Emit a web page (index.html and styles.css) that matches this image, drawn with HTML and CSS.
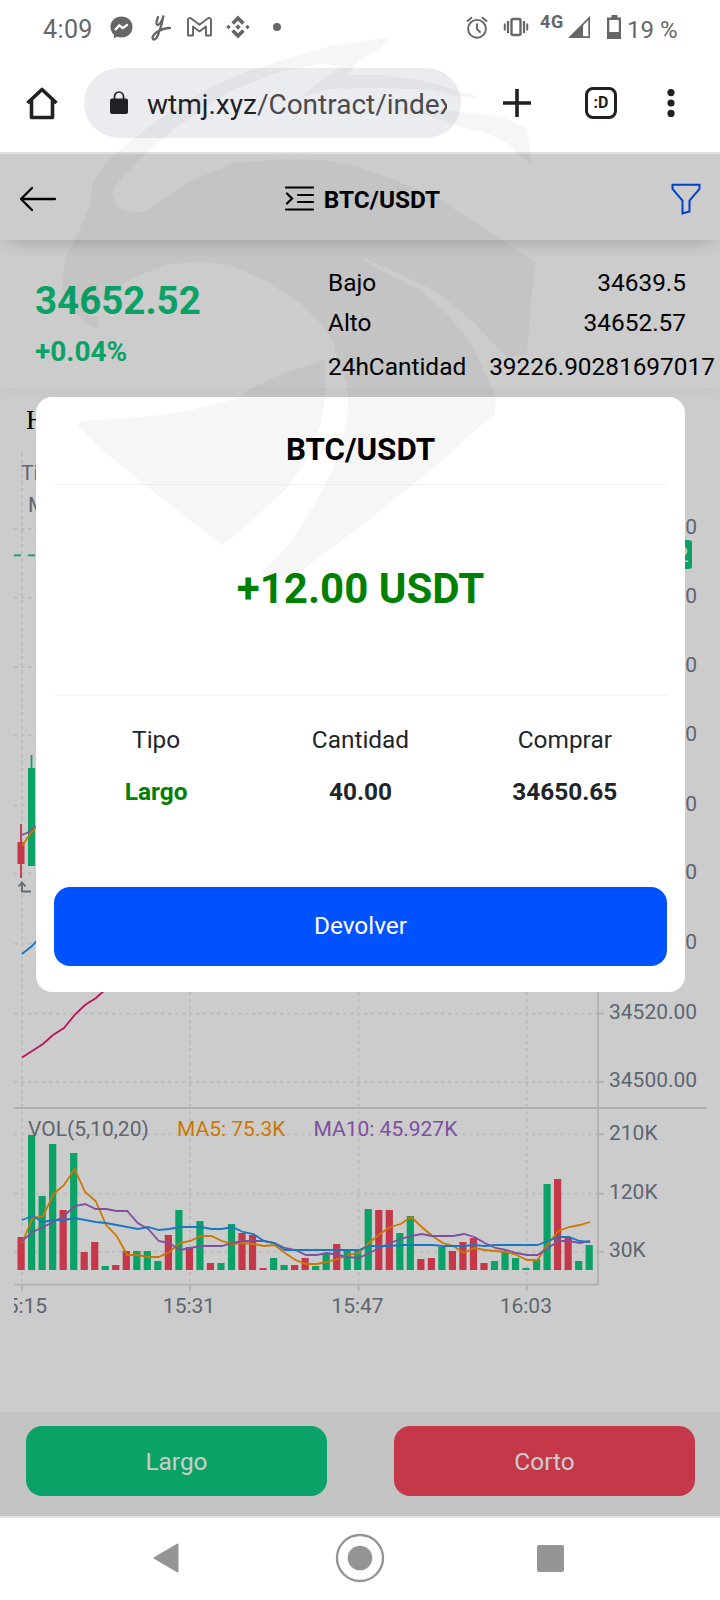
FILE: index.html
```html
<!DOCTYPE html>
<html lang="es">
<head>
  <meta charset="UTF-8">
  <meta name="viewport" content="width=device-width, initial-scale=1.0">
  <title>BTC/USDT</title>
  <link rel="stylesheet" href="styles.css">
</head>
<body>

<div class="phone">

  <div class="status-bar">
    <span class="clock">4:09</span>
    <svg class="ic-messenger" width="23" height="23" viewBox="0 0 23 23"><path d="M11.5 0.5C5.2 0.5 0.5 5 0.5 11c0 3.2 1.4 5.900 3.400 7.700V22.300l3.200-1.500c1.400.5 2.900.7 4.400.7 6.300 0 11-4.500 11-10.500S17.800.5 11.500.5z" fill="#666"/><path d="M5 14l4.300-4.600 3.400 2.700 5-3.600" fill="none" stroke="#fff" stroke-width="2.400"/></svg>
    <svg class="ic-y" width="20" height="27" viewBox="0 0 20 27"><path d="M7 3C5.500 7 4.800 10.500 6.500 11c2 .4 4.700-4 6-9.500C11.500 8 9 16 7 21c-1.300 3.500-3.500 5.500-5 4-1.200-1.500.2-4.500 4-7C10 15.500 14 14 19 14" fill="none" stroke="#666" stroke-width="2.300" stroke-linecap="round"/></svg>
    <svg class="ic-gmail" width="25" height="20" viewBox="0 0 25 20"><path d="M1 18.500V2.800C1 1 3 .6 4.300 1.600l8.200 6.200 8.200-6.200C22 .6 24 1 24 2.800v15.700h-5V9.500l-6.500 4.900L6 9.500v9z" fill="none" stroke="#666" stroke-width="1.900" stroke-linejoin="round"/></svg>
    <svg class="ic-binance" width="24" height="24" viewBox="0 0 24 24" fill="#666"><path d="M12 .5l6.700 6.700-2.600 2.600L12 5.700 7.900 9.800 5.300 7.200zM12 23.500l6.700-6.700-2.600-2.600-4.100 4.100-4.100-4.100-2.600 2.600zM12 9.300l2.700 2.700-2.700 2.700L9.300 12zM2.500 9.700L4.800 12l-2.300 2.300L.2 12zM21.500 9.700l2.300 2.300-2.300 2.300-2.300-2.300z"/></svg>
    <span class="more-dot"></span>
    <span class="spacer"></span>
    <svg class="ic-alarm" width="22" height="23" viewBox="0 0 22 23" fill="none" stroke="#666" stroke-width="1.900"><circle cx="11" cy="12.800" r="8.900"/><path d="M11 7.500v5.500l3.500 3.700M1 5.500L6 1.200M21 5.500L16 1.200"/></svg>
    <svg class="ic-vibrate" width="26" height="20" viewBox="0 0 26 20" fill="none" stroke="#666"><rect x="8.500" y="2" width="9" height="16" rx="1.500" stroke-width="2.400"/><path d="M5 4v12M21 4v12" stroke-width="2.200"/><path d="M1.800 6.500v7M24.200 6.500v7" stroke-width="2"/></svg>
    <span class="net">4G</span>
    <svg class="ic-signal" width="22" height="22" viewBox="0 0 22 22"><path d="M0 22L22 0v22z" fill="#666"/><path d="M15 9.500L20.300 4v16.300H15z" fill="#fff"/></svg>
    <svg class="ic-battery" width="15" height="24" viewBox="0 0 15 24"><path d="M4.500 0h6v2.500h3.500V24H0V2.500h4.500z" fill="#666"/><path d="M2.300 5h9.500v12H2.300z" fill="#fff"/></svg>
    <span class="percent">19 %</span>
  </div>

  <div class="browser-bar">
    <svg class="home" width="32" height="33" viewBox="0 0 32 33"><path d="M1.500 16L16 2.500 30.500 16M5.500 13v17.500h21V13" fill="none" stroke="#202124" stroke-width="3.600" stroke-linejoin="round"/></svg>
    <div class="url-pill">
      <svg width="18" height="24" viewBox="0 0 18 24"><rect x="0" y="7.500" width="18" height="15.500" rx="2" fill="#202124"/><path d="M4.500 8V5.500a4.500 4.500 0 0 1 9 0V8" fill="none" stroke="#202124" stroke-width="1.700"/></svg>
      <span class="url">wtmj.xyz<span>/Contract/index</span></span>
    </div>
    <svg class="plus" width="28" height="28" viewBox="0 0 28 28"><path d="M14 0v28M0 14h28" stroke="#202124" stroke-width="3.600"/></svg>
    <span class="tabs">:D</span>
    <svg class="dots" width="8" height="28" viewBox="0 0 8 28" fill="#202124"><circle cx="4" cy="3.600" r="3.600"/><circle cx="4" cy="14" r="3.600"/><circle cx="4" cy="24.400" r="3.600"/></svg>
  </div>

  <div class="page">
    <div class="app-header">
      <svg width="38" height="26" viewBox="0 0 38 26"><path d="M36 13H2M13 2L2 13l11 11" fill="none" stroke="#000" stroke-width="2.300" stroke-linecap="round" stroke-linejoin="round"/></svg>
      <div class="pair">
        <svg width="29" height="26" viewBox="0 0 29 26"><path d="M1 1.500h27M13 9h15M13 16h15M1 23.500h27M2 7.500l5 5-5 5" fill="none" stroke="#000" stroke-width="2.200" stroke-linecap="round"/></svg>
        <span>BTC/USDT</span>
      </div>
      <svg width="30" height="32" viewBox="0 0 30 32"><path d="M1.500 1.800h27V6L18.500 17.500v11l-7 2V17.500L1.500 6z" fill="none" stroke="#0052ff" stroke-width="2"/></svg>
    </div>

    <div class="quote">
      <div class="last">
        <div class="price">34652.52</div>
        <div class="change">+0.04%</div>
      </div>
      <div class="stats">
        <div class="stat"><span>Bajo</span><span>34639.5</span></div>
        <div class="stat"><span>Alto</span><span>34652.57</span></div>
        <div class="stat"><span>24hCantidad</span><span>39226.90281697017</span></div>
      </div>
    </div>

    <svg class="chart" id="chart" width="720" height="1024" viewBox="0 388 720 1024"></svg>

    <div class="trade-bar">
      <button class="long">Largo</button>
      <button class="short">Corto</button>
    </div>

    <!-- Order result -->
    <div class="mask">
      <div class="modal">
        <h2>BTC/USDT</h2>
        <div class="profit">+12.00 USDT</div>
        <div class="order">
          <div><p>Tipo</p><b class="up">Largo</b></div>
          <div><p>Cantidad</p><b>40.00</b></div>
          <div><p>Comprar</p><b>34650.65</b></div>
        </div>
        <button class="back">Devolver</button>
      </div>
    </div>
  </div>

  <div class="nav-bar">
    <svg width="26" height="30" viewBox="0 0 26 30"><path d="M24.500 1.500v27L1.500 15z" fill="#959595" stroke="#959595" stroke-width="2" stroke-linejoin="round"/></svg>
    <svg class="nav-home" width="50" height="50" viewBox="0 0 50 50"><circle cx="25" cy="25" r="23" fill="none" stroke="#959595" stroke-width="2.400"/><circle cx="25" cy="25" r="12.300" fill="#959595"/></svg>
    <svg width="27" height="27" viewBox="0 0 27 27"><rect width="27" height="27" rx="2" fill="#959595"/></svg>
  </div>

  <svg class="watermark" width="720" height="1600" viewBox="0 0 720 1600">
    <path d="M391 37L331 46 285 59 248 71 211 87 184 103 156 121 133 139 110 159 100 170 92 186 90 205 76 237 65 259 62 287 72 309 85 323 100 330 98 316 91 317 100 300 122 285 133 278 167 265 200 262 230 265 267 282 300 303 320 323 333 340 338 363 347 383 348 400 347 420 337 460 317 500 290 543 262 572 273 583 300 572 333 547 360 527 397 497 440 463 473 432 495 415 496 397 487 377 473 347 450 317 420 290 383 272 361 257 393 271 437 292 470 319 507 357 527 355 532 293 536 263 503 240 487 230 440 200 400 182 360 167 323 160 283 159 233 163 193 180 167 197 147 210 133 213 117 208 112 193 120 180 143 156 173 130 217 100 233 90 277 73 320 64 341 66 327 76 300 98 330 89 380 88 432 90 460 97 478 99 478 97 460 91 420 80 380 75 347 75 358 62 381 48z"/>
    <path d="M386 107L463 112 503 117 527 128 532 163 517 154 507 143 487 133 460 127 427 115z"/>
    <path d="M325 360L287 372 253 387 239 398 203 407 177 413 140 417 82 421 78 426 100 448 145 485 193 523 223 545 253 520 287 488 307 460 320 427 325 400z"/>
  </svg>

</div>

<script src="chart.js"></script>
</body>
</html>
```

FILE: styles.css
```css
* {
  box-sizing: border-box;
}

body {
  margin: 0;
  font-family: Roboto, "Liberation Sans", sans-serif;
  background-color: white;
}

svg {
  display: block;
  flex: none;
}

button {
  border: none;
  padding: 0;
  font-family: inherit;
  font-size: 24.400px;
  border-radius: 16px;
}

.phone {
  position: relative;
  width: 720px;
  height: 1600px;
  overflow: hidden;
  display: flex;
  flex-direction: column;
}

/* status bar */
.status-bar {
  height: 56px;
  padding: 0 42px 2px 43px;
  display: flex;
  align-items: center;
  color: #666;
}

.clock {
  width: 67px;
  font-size: 25px;
  letter-spacing: 0.4px;
  padding-top: 5px;
}

.ic-y {
  margin-left: 18px;
}

.ic-gmail {
  margin-left: 16px;
}

.ic-binance {
  margin-left: 14px;
}

.more-dot {
  width: 8px;
  height: 8px;
  margin-left: 23px;
  border-radius: 50%;
  background-color: #666;
}

.spacer {
  flex: 1;
}

.ic-vibrate {
  margin-left: 15px;
}

.net {
  width: 28px;
  margin-left: 11px;
  font-size: 18px;
  font-weight: bold;
  line-height: 20px;
  letter-spacing: 0.6px;
  padding-bottom: 10px;
}

.ic-battery {
  margin-left: 17px;
}

.percent {
  width: 51px;
  margin-left: 5px;
  padding-top: 5px;
  font-size: 24px;
  white-space: nowrap;
}

/* browser */
.browser-bar {
  height: 98px;
  padding: 12px 45px 14px 26px;
  display: flex;
  align-items: center;
  border-bottom: 2px solid #e0e0e0;
}

.url-pill {
  width: 377px;
  height: 70px;
  margin-left: 26px;
  padding: 0 14px 0 26px;
  display: flex;
  align-items: center;
  border-radius: 35px;
  background-color: #ebecf0;
}

.url {
  flex: 1;
  margin-left: 19px;
  overflow: hidden;
  white-space: nowrap;
  font-size: 28px;
  color: #202124;
  line-height: 40px;
  padding-top: 4px;
}

.url span {
  color: #4a4b4e;
}

.plus {
  margin-left: 42px;
}

.tabs {
  width: 32px;
  height: 32px;
  margin-left: 54px;
  border: 3.500px solid #202124;
  border-radius: 8px;
  font-size: 16px;
  font-weight: bold;
  line-height: 25px;
  text-align: center;
  color: #202124;
}

.dots {
  margin-left: 50px;
}

/* page */
.page {
  position: relative;
  height: 1362px;
}

.app-header {
  position: relative;
  height: 86px;
  padding: 3px 19px 0 19px;
  display: flex;
  align-items: center;
  justify-content: space-between;
  box-shadow: 0 10px 16px -8px rgba(0, 0, 0, 0.2);
}

.pair {
  display: flex;
  align-items: center;
  gap: 10px;
  margin-right: 3px;
  font-size: 24.400px;
  font-weight: bold;
}

.pair span {
  padding-top: 2px;
}

.quote {
  height: 148px;
  padding: 23px 34px 0 35px;
  display: flex;
  justify-content: space-between;
  box-shadow: 0 8px 16px -6px rgba(0, 0, 0, 0.06);
}

.last {
  font-weight: bold;
  color: #0ecb81;
}

.price {
  margin-top: 12px;
  font-size: 38.500px;
  line-height: 52px;
}

.change {
  margin-top: 10px;
  font-size: 28px;
  line-height: 30px;
}

.stats {
  width: 358px;
  font-size: 24.400px;
  line-height: 40px;
}

.stat {
  display: flex;
  justify-content: space-between;
  gap: 23px;
  white-space: nowrap;
}

.stat:last-child {
  margin-top: 4px;
}

.chart {
  font-size: 21px;
  fill: #76808f;
}

.trade-bar {
  height: 104px;
  padding: 14px 25px 20px 26px;
  display: flex;
  justify-content: space-between;
  background-color: #f5f5f5;
}

.trade-bar button {
  width: 301px;
  color: white;
}

.long {
  background-color: #0ecb81;
}

.short {
  background-color: #f6465d;
}

/* modal */
.mask {
  position: absolute;
  inset: 0;
  background-color: rgba(0, 0, 0, 0.2);
}

.modal {
  width: 649px;
  height: 595px;
  margin: 243px 0 0 36px;
  padding: 18px 18px 26px;
  display: flex;
  flex-direction: column;
  background-color: white;
  border-radius: 16px;
  text-align: center;
}

.modal h2 {
  height: 70px;
  margin: 0;
  border-bottom: 1px solid #f3f3f3;
  font-size: 31.300px;
  line-height: 69px;
  color: black;
}

.profit {
  height: 211px;
  border-bottom: 1px solid #f3f3f3;
  font-size: 42px;
  font-weight: bold;
  line-height: 207px;
  color: green;
}

.order {
  flex: 1;
  display: grid;
  grid-template-columns: 1fr 1fr 1fr;
  padding-top: 24px;
  font-size: 24.400px;
  line-height: 40px;
  color: #212529;
}

.order p {
  margin: 0 0 12px;
}

.up {
  color: green;
}

.back {
  height: 79px;
  padding-bottom: 2px;
  background-color: #0052ff;
  color: white;
}

/* android navigation */
.nav-bar {
  height: 84px;
  padding: 0 156px 2px 153px;
  display: flex;
  align-items: center;
  justify-content: space-between;
  border-top: 2px solid #e2e2e2;
}

.nav-home {
  margin-left: 4px;
}

.watermark {
  position: absolute;
  left: 0;
  top: 0;
  fill: rgba(0, 0, 0, 0.037);
  pointer-events: none;
}
```

FILE: chart.js
```js
const GREEN = '#0ecb81';
const RED = '#f6465d';
const STEP = 10.52;
const BASE = 1270;

// volume bars: direction + height
const volume = ['r33', 'g135', 'g74', 'g126', 'r60', 'g117', 'r18', 'r28', 'g4', 'r5', 'r19', 'g19', 'g19', 'g9',
  'r35', 'g60', 'r23', 'g49', 'r7', 'g7', 'g46', 'r37', 'r35', 'r2', 'g12', 'g5', 'r5', 'r12', 'g4', 'g16', 'r26',
  'g19', 'g19', 'g61', 'r60', 'r60', 'g37', 'g54', 'r11', 'r12', 'g23', 'r19', 'r28', 'r32', 'r7', 'g9', 'g18',
  'g12', 'g2', 'g11', 'g86', 'r91', 'r32', 'g9', 'g25'];

const ma5 = [27, 52, 54, 76, 85, 101, 78, 69, 45, 34, 15, 15, 13, 13, 18, 27, 29, 34, 34, 29, 26, 27, 26, 24, 25, 17,
  10, 6, 6, 8, 11, 15, 17, 27, 36, 43, 46, 53, 43, 34, 27, 24, 17, 22, 20, 19, 18, 15, 10, 10, 26, 39, 43, 45, 48];
const ma10 = [29, 38, 43, 48, 54, 64, 66, 61, 61, 59, 59, 47, 41, 29, 27, 20, 22, 24, 24, 24, 27, 29, 29, 29, 27, 22,
  20, 15, 15, 17, 15, 13, 12, 17, 22, 27, 31, 34, 36, 34, 34, 34, 36, 33, 27, 22, 20, 17, 15, 15, 22, 29, 29, 27, 29];
const ma20 = [50, 54, 48, 50, 50, 52, 50, 48, 47, 45, 43, 41, 43, 40, 41, 43, 43, 43, 41, 41, 43, 38, 36, 29, 27, 20,
  20, 20, 20, 20, 20, 20, 20, 24, 24, 24, 25, 25, 25, 25, 24, 24, 24, 25, 24, 25, 25, 25, 25, 25, 29, 33, 33, 29, 28];

const prices = [529, 597.5, 667, 735.5, 805.5, 873.5, 943.7, 1013.5, 1082];
const volumes = [['210K', 1134.3], ['120K', 1193.7], ['30K', 1251.7]];
const times = [['15:15', 22], ['15:31', 190], ['15:47', 358.5], ['16:03', 526.8]];

let out = '<clipPath id="plot"><rect x="14" y="388" width="693" height="1024"/></clipPath>';

function line(x1, y1, x2, y2, color, dash) {
  out += `<path d="M${x1} ${y1}L${x2} ${y2}" stroke="${color}" stroke-width="1.8"${dash ? ` stroke-dasharray="${dash}"` : ''}/>`;
}

function text(x, y, value, extra) {
  out += `<text x="${x}" y="${y}" ${extra || ''}>${value}</text>`;
}

function polyline(points, color) {
  out += `<polyline points="${points}" fill="none" stroke="${color}" stroke-width="1.8"/>`;
}

function average(data, color) {
  polyline(data.map((h, i) => `${22 + i * STEP},${BASE - h}`).join(' '), color);
}

// grid
prices.forEach(y => line(14, y, 597, y, '#ededed', '3.5 3.5'));
volumes.forEach(v => line(14, v[1], 597, v[1], '#ededed', '3.5 3.5'));
times.forEach(t => line(t[1], 453, t[1], 1284, '#ededed', '3.5 3.5'));

// axes
line(14, 1108, 707, 1108, '#ddd');
line(14, 1284.7, 598, 1284.7, '#ddd');
line(598, 453, 598, 1285, '#ddd');
prices.forEach((y, i) => {
  line(598, y, 604, y, '#ddd');
  text(609, y + 5, (34660 - i * 20) + '.00');
});
volumes.forEach(v => {
  line(598, v[1], 604, v[1], '#ddd');
  text(609, v[1] + 5.5, v[0]);
});
out += '<g clip-path="url(#plot)">';
times.forEach(t => {
  line(t[1], 1285, t[1], 1291, '#ddd');
  text(t[1] - 1, 1313, t[0], 'text-anchor="middle"');
});
out += '</g>';

// candles
line(21, 824, 21, 878, RED);
out += `<rect x="17.5" y="842" width="7" height="22" fill="${RED}"/>`;
line(31.5, 755, 31.5, 768, GREEN);
out += `<rect x="28" y="768" width="7" height="98" fill="${GREEN}"/>`;
polyline('22,835 30,831.5 40,823', '#9d65c9');
polyline('22,846 30,834 40,823', '#ff9600');
polyline('22,954 32,946 40,937', '#2196f3');
polyline('22,1057.500 43,1044 53,1035 64,1028 75,1014.500 85,1005 96,998 106,989', '#e11d74');
polyline('18.5,886.500 22,882.500 25.5,886.500', '#76808f');
polyline('22,882.500 22,891.500 31,891.500', '#76808f');

// last price
line(14, 555.3, 598, 555.3, GREEN, '7 7');
out += `<rect x="601" y="540" width="91" height="29" rx="3" fill="${GREEN}"/>`;
text(600.5, 561.5, '34652.52', 'fill="#fff"');

// volume
volume.forEach((v, i) => {
  const h = Number(v.slice(1));
  out += `<rect x="${17.5 + i * STEP}" y="${BASE - h}" width="7.2" height="${h}" fill="${v[0] === 'g' ? GREEN : RED}"/>`;
});
average(ma5, '#ff9600');
average(ma10, '#9d65c9');
average(ma20, '#2196f3');

// legends
text(26, 429, 'H', 'fill="#000" font-family="Liberation Serif, serif" font-size="27"');
text(21, 480, 'Ti');
text(28, 512, 'M');
text(28, 1135.7, 'VOL(5,10,20)');
text(177, 1135.7, 'MA5: 75.3K', 'fill="#ff9600"');
text(313.5, 1135.7, 'MA10: 45.927K', 'fill="#9d65c9"');

document.getElementById('chart').innerHTML = out;
```
